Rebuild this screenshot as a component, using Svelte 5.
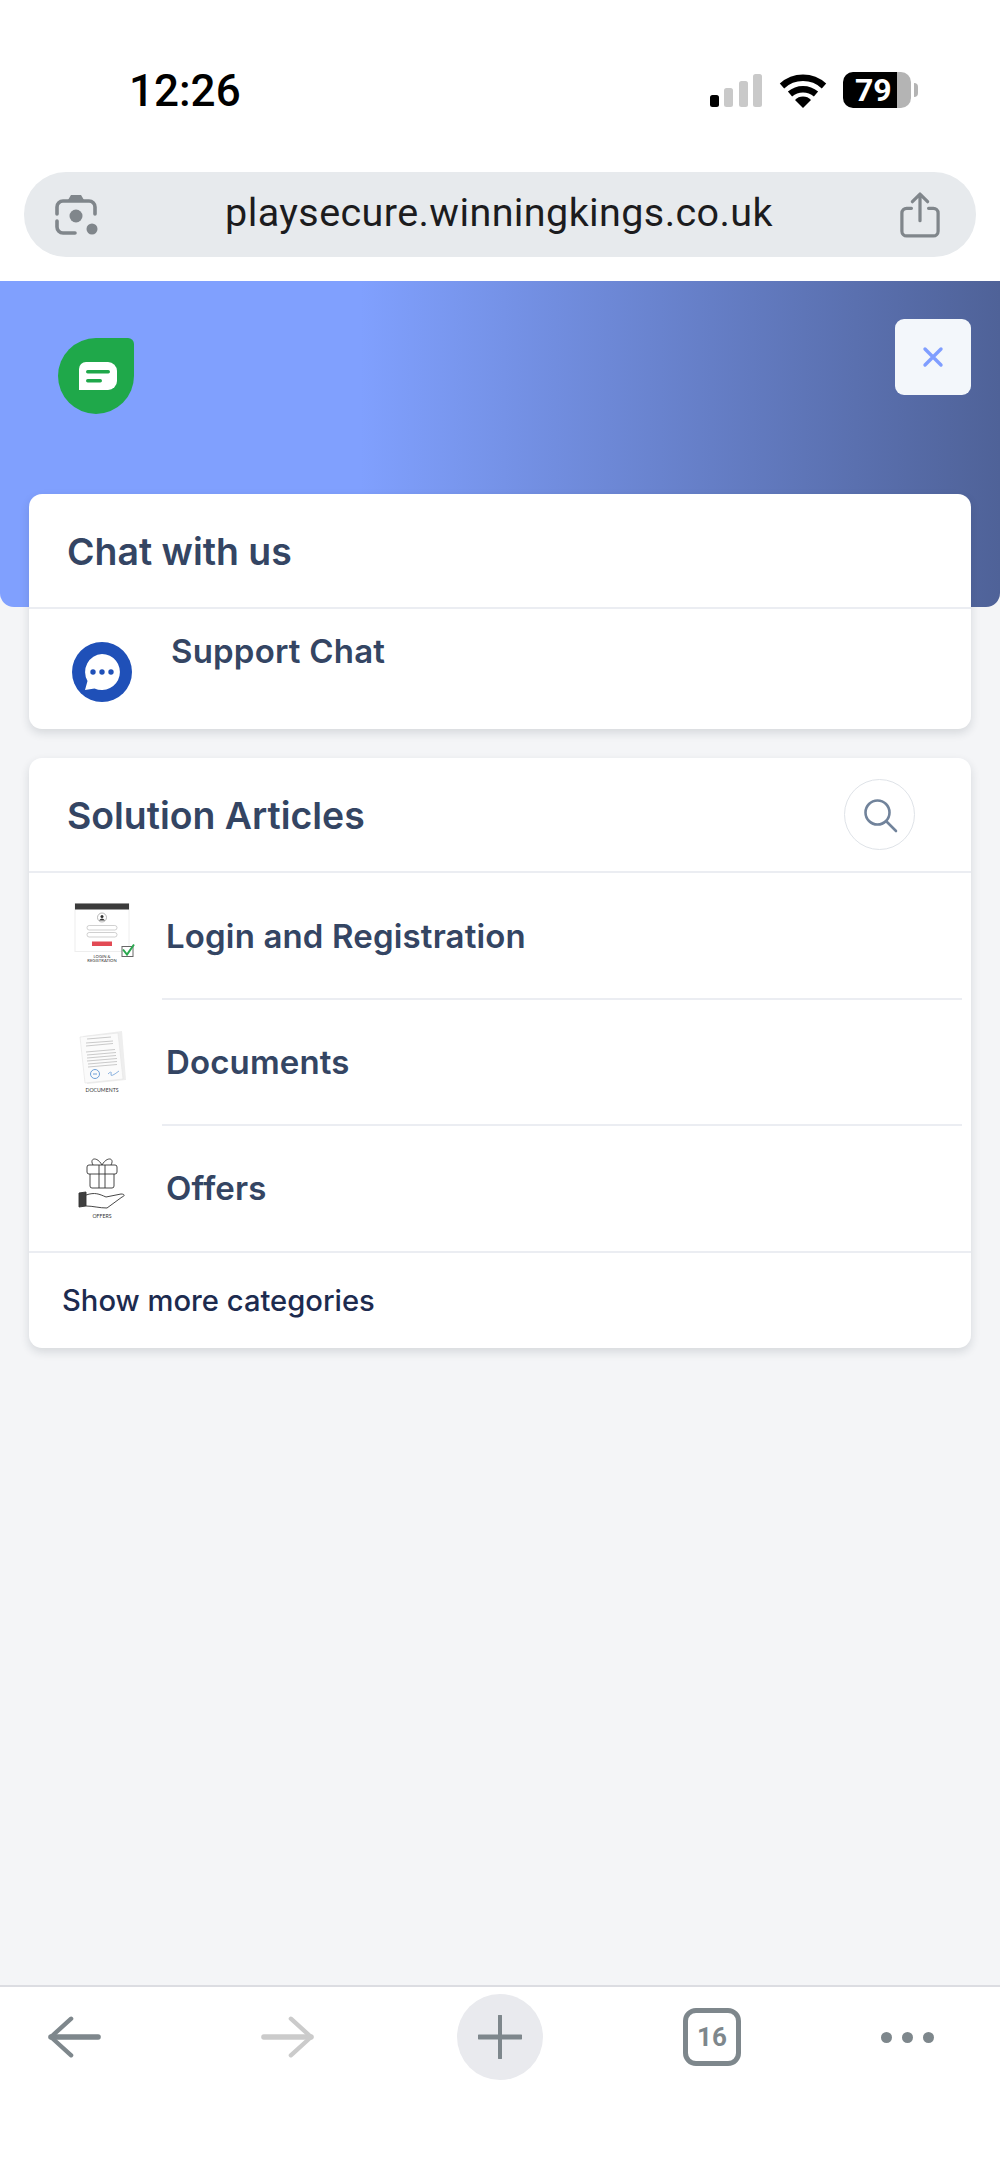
<script>
  const articles = [
    { name: 'Login and Registration', kind: 'login' },
    { name: 'Documents', kind: 'docs' },
    { name: 'Offers', kind: 'offers' }
  ];
</script>

<div class="phone">
  <header class="status">
    <span class="time">12:26</span>
    <div class="status-icons">
      <svg class="signal" width="54" height="34" viewBox="0 0 54 34">
        <rect x="1" y="21" width="9" height="12" rx="2.5" fill="#000"/>
        <rect x="15" y="14" width="9" height="19" rx="2.5" fill="#c9c9c9"/>
        <rect x="30" y="7" width="9" height="26" rx="2.5" fill="#c9c9c9"/>
        <rect x="44" y="0" width="9" height="33" rx="2.5" fill="#c9c9c9"/>
      </svg>
      <svg class="wifi" width="48" height="34" viewBox="0 0 48 34">
        <path d="M3 12 A31 31 0 0 1 45 12" fill="none" stroke="#000" stroke-width="6.5"/>
        <path d="M11 20 A20 20 0 0 1 37 20" fill="none" stroke="#000" stroke-width="6.5"/>
        <path d="M16 26 A11 11 0 0 1 32 26 L24 34 Z" fill="#000"/>
      </svg>
      <div class="battery">
        <div class="batt-body"><span>79</span></div>
        <i class="batt-nub"></i>
      </div>
    </div>
  </header>

  <div class="urlbar">
    <svg width="46" height="46" viewBox="0 0 46 46" fill="none" stroke="#80868b" stroke-width="3.6" stroke-linecap="round">
      <path d="M4 22 V15 a6 6 0 0 1 6-6 H36 a6 6 0 0 1 6 6 V22"/>
      <path d="M4 29 V35 a6 6 0 0 0 6 6 H22"/>
      <path d="M15 8 L18 3 H28 L31 8 Z" fill="#80868b" stroke="none"/>
      <circle cx="23" cy="24" r="6.5" fill="#80868b" stroke="none"/>
      <circle cx="39" cy="37" r="5.5" fill="#80868b" stroke="none"/>
    </svg>
    <span class="url">playsecure.winningkings.co.uk</span>
    <svg width="40" height="48" viewBox="0 0 42 48" fill="none" stroke="#80868b" stroke-width="3.4" stroke-linecap="round" stroke-linejoin="round">
      <path d="M12 17 H7 a5 5 0 0 0-5 5 V41 a5 5 0 0 0 5 5 H35 a5 5 0 0 0 5-5 V22 a5 5 0 0 0-5-5 H30"/>
      <path d="M21 30 V3 M13 10 L21 2 L29 10"/>
    </svg>
  </div>

  <main class="page">
    <section class="hero">
      <div class="hero-top">
        <svg class="logo" width="76" height="76" viewBox="0 0 76 76">
          <path d="M38 0 H70 a6 6 0 0 1 6 6 V38 A38 38 0 1 1 38 0 Z" fill="#1fa84a"/>
          <path d="M28 24 H50 a9 9 0 0 1 9 9 V43 a9 9 0 0 1-9 9 H21 V31 a7 7 0 0 1 7-7 Z" fill="#fff"/>
          <rect x="28" y="32" width="24" height="3.5" rx="1.7" fill="#1fa84a"/>
          <rect x="28" y="41" width="16" height="3.5" rx="1.7" fill="#1fa84a"/>
        </svg>
        <button class="close" aria-label="Close">
          <svg width="22" height="22" viewBox="0 0 22 22" stroke="#7f9eff" stroke-width="3.4" stroke-linecap="round">
            <path d="M3 3 L19 19 M19 3 L3 19"/>
          </svg>
        </button>
      </div>
    </section>

    <div class="cards">
      <section class="card chat">
        <h2 class="card-head">Chat with us</h2>
        <div class="chat-row">
          <svg width="60" height="60" viewBox="0 0 60 60">
            <circle cx="30" cy="30" r="30" fill="#1f50b8"/>
            <path d="M30 12 a18 18 0 1 1-7.5 34.4 L13 48 L15.5 39 A18 18 0 0 1 30 12 Z" fill="#fff"/>
            <circle cx="21" cy="30" r="2.7" fill="#1f50b8"/>
            <circle cx="30" cy="30" r="2.7" fill="#1f50b8"/>
            <circle cx="39" cy="30" r="2.7" fill="#1f50b8"/>
          </svg>
          <span class="chat-name">Support Chat</span>
        </div>
      </section>

      <section class="card">
        <div class="card-head with-search">
          <h2>Solution Articles</h2>
          <button class="search" aria-label="Search">
            <svg width="38" height="38" viewBox="0 0 38 38" fill="none" stroke="#71839b" stroke-width="2.6" stroke-linecap="round">
              <circle cx="16.5" cy="16.5" r="12"/>
              <path d="M25.5 25.5 L35 35"/>
            </svg>
          </button>
        </div>
        <ul class="list">
          {#each articles as a}
            <li class="row">
              <div class="thumb">
                {#if a.kind === 'login'}
                  <svg width="64" height="64" viewBox="0 0 64 64">
                    <g transform="translate(0 -1.5)">
                      <rect x="2" y="1" width="54" height="48" fill="#fff" stroke="#eee"/>
                      <rect x="2" y="1" width="54" height="6" fill="#3b3b3b"/>
                      <circle cx="29" cy="15" r="4.5" fill="#fff" stroke="#999" stroke-width=".7"/>
                      <circle cx="29" cy="14" r="1.5" fill="#333"/>
                      <path d="M26 18 Q29 14 32 18Z" fill="#333"/>
                      <rect x="14" y="23" width="30" height="4.5" rx="2.2" fill="#fff" stroke="#bbb" stroke-width=".7"/>
                      <rect x="14" y="30" width="30" height="4.5" rx="2.2" fill="#fff" stroke="#bbb" stroke-width=".7"/>
                      <rect x="19" y="39" width="20" height="4.5" fill="#e24a54"/>
                      <rect x="49" y="44" width="11" height="10" fill="#fff" stroke="#666" stroke-width="1"/>
                      <path d="M50 47 L54 52 L61 42" fill="none" stroke="#2aa84f" stroke-width="2"/>
                      <text x="29" y="55" class="tiny small">LOGIN &amp;</text>
                      <text x="29" y="59.5" class="tiny small">REGISTRATION</text>
                    </g>
                  </svg>
                {:else if a.kind === 'docs'}
                  <svg width="64" height="64" viewBox="0 0 64 64">
                    <path d="M10 6 L49 1 L53 50 L14 54 Z" fill="#eee"/>
                    <path d="M7 7 L45 3 L50 49 L12 53 Z" fill="#fbfbfb" stroke="#e6e6e6" stroke-width=".7"/>
                    <path d="M14 9 L38 7 M13 13 L40 11 M13 16 L40 13.5 M13 22 L42 19.5 M14 25 L43 22.5 M14 28 L43 25.5 M14 31 L44 28.5 M15 34 L44 31.5 M15 37 L44 34.5" stroke="#c4c4c4" stroke-width=".9"/>
                    <circle cx="22" cy="44" r="4.5" fill="none" stroke="#6ea0d8" stroke-width="1"/>
                    <path d="M20 44 H24" stroke="#6ea0d8" stroke-width="1"/>
                    <path d="M35 44 Q39 40 38 44 T46 41" fill="none" stroke="#6ea0d8" stroke-width=".8"/>
                    <text x="29" y="62" class="tiny">DOCUMENTS</text>
                  </svg>
                {:else}
                  <svg width="64" height="64" viewBox="0 0 64 64" fill="none" stroke="#333" stroke-width=".9">
                    <rect x="14" y="9" width="30" height="9" rx="2"/>
                    <path d="M17 18 V30 a2 2 0 0 0 2 2 H39 a2 2 0 0 0 2-2 V18 M26 9 V32 M32 9 V32"/>
                    <path d="M29 9 C24 0 16 2 20 9 M29 9 C34 0 42 2 38 9"/>
                    <path d="M13 39 C22 36 26 38 33 41 L48 38 C52 38 52 40 49 41 L34 52 C26 52 20 50 13 50"/>
                    <path d="M6 37 L13 36 V50 L6 51 Z" fill="#3f3f3f"/>
                    <text x="29" y="62" class="tiny">OFFERS</text>
                  </svg>
                {/if}
              </div>
              <span class="row-name">{a.name}</span>
            </li>
          {/each}
        </ul>
        <div class="more">Show more categories</div>
      </section>
    </div>
  </main>

  <nav class="toolbar">
    <svg class="back" width="54" height="44" viewBox="0 0 56 44" fill="none" stroke="#7e878c" stroke-width="5.5" stroke-linecap="round" stroke-linejoin="round">
      <path d="M3 22 H52"/>
      <path d="M24 3 L3 22 L24 41" stroke-width="4.5"/>
    </svg>
    <svg class="fwd" width="54" height="44" viewBox="0 0 56 44" fill="none" stroke="#cbcbcb" stroke-width="5.5" stroke-linecap="round" stroke-linejoin="round">
      <path d="M53 22 H4"/>
      <path d="M32 3 L53 22 L32 41" stroke-width="4.5"/>
    </svg>
    <div class="plus">
      <svg width="44" height="44" viewBox="0 0 44 44" stroke="#7e878c" stroke-linecap="round">
        <path d="M22 1 V43" stroke-width="4"/>
        <path d="M1 22 H43" stroke-width="5"/>
      </svg>
    </div>
    <div class="tabs">16</div>
    <div class="dots"><i></i><i></i><i></i></div>
  </nav>
</div>

<style>
  :global(body) { margin: 0; background: #fff; }
  .phone {
    width: 1000px;
    height: 2171px;
    display: flex;
    flex-direction: column;
    font-family: Inter, "Liberation Sans", sans-serif;
    overflow: hidden;
    background: #fff;
  }
  .status {
    height: 172px;
    flex: none;
    display: flex;
    align-items: flex-start;
    justify-content: space-between;
    padding: 0 82px 0 129px;
    box-sizing: border-box;
  }
  .time {
    margin-top: 66px;
    font-size: 44px;
    line-height: 50px;
    font-weight: 500;
    color: #000;
    font-family: Roboto, Inter, sans-serif;
  }
  .status-icons {
    margin-top: 72px;
    display: flex;
    align-items: flex-end;
    height: 36px;
  }
  .signal { margin-right: 16px; }
  .wifi { margin-right: 16px; }
  .battery { display: flex; align-items: center; }
  .batt-body {
    width: 68px;
    height: 36px;
    border-radius: 10px;
    background: linear-gradient(90deg, #000 0 79%, #b4b4b4 79%);
    color: #fff;
    font: 700 32px/36px Roboto, Inter, sans-serif;
    box-sizing: border-box;
    padding-left: 12px;
  }
  .batt-nub {
    width: 4px;
    height: 14px;
    margin-left: 3px;
    background: #b4b4b4;
    border-radius: 0 4px 4px 0;
  }
  .urlbar {
    flex: none;
    margin: 0 24px;
    height: 85px;
    width: 952px;
    box-sizing: border-box;
    border-radius: 42px;
    background: #e7eaed;
    display: flex;
    align-items: center;
    justify-content: space-between;
    padding: 0 36px 0 29px;
  }
  .url {
    font-size: 39.5px;
    line-height: 48px;
    margin-top: -4px;
    color: #1c1c1e;
    font-family: Roboto, Inter, sans-serif;
    letter-spacing: .4px;
    margin-left: -1px;
  }
  .page {
    flex: none;
    margin-top: 24px;
    height: 1704px;
    background: #f4f5f7;
    border-bottom: 2px solid #dcdde2;
  }
  .hero {
    height: 326px;
    background: linear-gradient(90deg, #80a0fe 0%, #80a0fe 36%, #4f6298 100%);
    border-radius: 0 0 14px 14px;
  }
  .hero-top {
    display: flex;
    justify-content: space-between;
    align-items: flex-start;
    padding: 38px 29px 0 58px;
  }
  .logo { margin-top: 19px; }
  .close {
    width: 76px;
    height: 76px;
    border: 0;
    border-radius: 9px;
    background: #f3f7fb;
    padding: 0;
    display: flex;
    align-items: center;
    justify-content: center;
  }
  .cards {
    margin: -113px 29px 0;
    display: flex;
    flex-direction: column;
    gap: 29px;
    position: relative;
  }
  .card {
    background: #fff;
    border-radius: 13px;
    box-shadow: 0 4px 10px rgba(30, 40, 60, .14);
    overflow: hidden;
  }
  .card-head, .card-head h2 {
    margin: 0;
    font-size: 37.4px;
    font-weight: 600;
    color: #344563;
  }
  .card-head {
    height: 115px;
    line-height: 115px;
    padding-left: 38px;
    border-bottom: 2px solid #ebedf2;
    box-sizing: border-box;
  }
  .with-search {
    display: flex;
    align-items: center;
    justify-content: space-between;
    padding-right: 56px;
  }
  .with-search h2 { line-height: 46px; margin-top: 2px; }
  .search {
    width: 71px;
    height: 71px;
    border-radius: 50%;
    border: 1.5px solid #dfe3e8;
    background: #fff;
    padding: 0;
    display: flex;
    align-items: center;
    justify-content: center;
  }
  .chat-row {
    height: 120px;
    display: flex;
    align-items: flex-start;
    padding-left: 43px;
  }
  .chat-row svg { margin-top: 33px; }
  .chat-name {
    margin: 23px 0 0 39px;
    font-size: 33px;
    line-height: 38px;
    font-weight: 600;
    color: #344563;
    letter-spacing: .2px;
  }
  .list { list-style: none; margin: 0; padding: 0; }
  .row {
    height: 126px;
    display: flex;
    align-items: center;
    position: relative;
    padding-left: 44px;
  }
  .row + .row::before {
    content: "";
    position: absolute;
    top: -1px;
    left: 133px;
    right: 9px;
    height: 2px;
    background: #ebedf2;
  }
  .thumb { width: 64px; height: 64px; flex: none; }
  .thumb svg { overflow: visible; }
  .row-name {
    margin-left: 29px;
    font-size: 33px;
    font-weight: 600;
    color: #344563;
    letter-spacing: .15px;
  }
  .tiny {
    font-family: Lato, sans-serif;
    font-size: 5.2px;
    fill: #333;
    stroke: none;
    text-anchor: middle;
  }
  .small { font-size: 4.2px; }
  .more {
    height: 95px;
    line-height: 95px;
    padding-left: 33px;
    border-top: 2px solid #ebedf2;
    font-size: 29.2px;
    font-weight: 500;
    color: #1d2b4f;
  }
  .toolbar {
    flex: none;
    display: flex;
    align-items: center;
    gap: 140px;
    padding: 0 0 0 48px;
    height: 100px;
  }
  .fwd { margin-left: 18px; }
  .plus {
    width: 86px;
    height: 86px;
    border-radius: 50%;
    background: #e9eaee;
    display: flex;
    align-items: center;
    justify-content: center;
    margin-left: 3px;
  }
  .tabs {
    width: 58px;
    height: 58px;
    box-sizing: border-box;
    border: 5px solid #7e878c;
    border-radius: 13px;
    color: #7e878c;
    font: 700 26px/48px Roboto, Inter, sans-serif;
    text-align: center;
  }
  .dots { display: flex; gap: 10px; }
  .dots i {
    width: 11px;
    height: 11px;
    border-radius: 50%;
    background: #7e878c;
  }
</style>
